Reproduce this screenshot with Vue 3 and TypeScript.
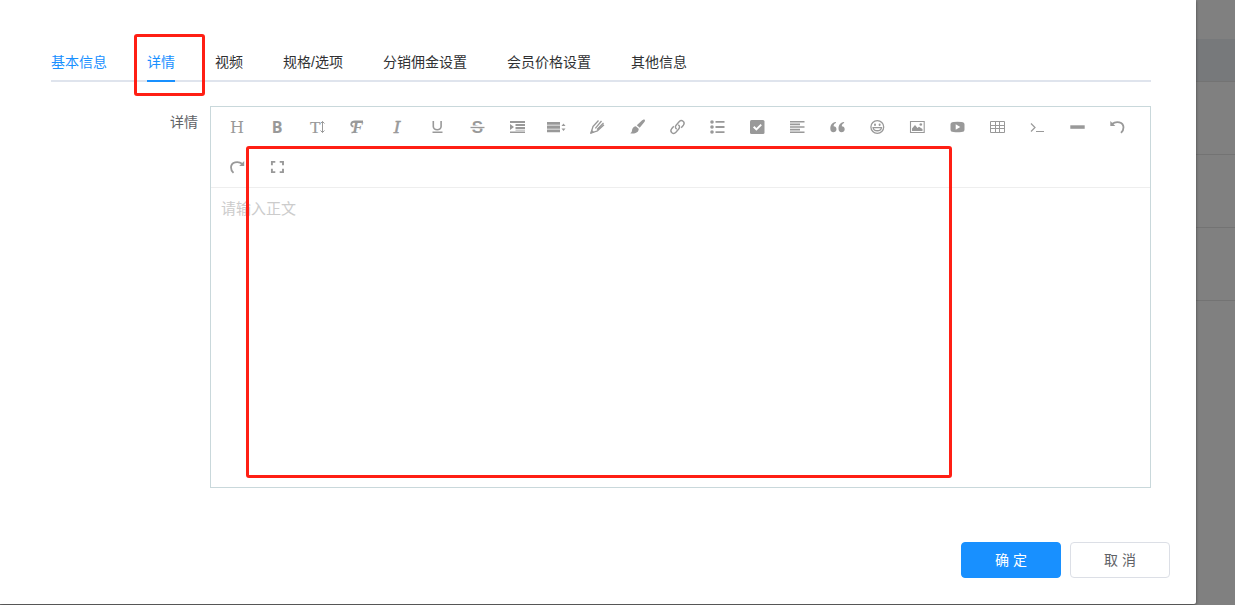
<script setup lang="ts">
import { ref } from 'vue'

interface Tool {
  name: string
  art: string
}

const tabs: string[] = ['基本信息', '详情', '视频', '规格/选项', '分销佣金设置', '会员价格设置', '其他信息']
const active = ref(1)
const body = ref('')

const serif = 'font-family="Liberation Serif, serif"'
const sans = 'font-family="Liberation Sans, sans-serif"'
const line = 'fill="none" stroke="currentColor"'

const tools: Tool[] = [
  { name: '标题', art: `<text x="8" y="14" font-size="16" text-anchor="middle" font-family="DejaVu Serif, serif">H</text>` },
  { name: '加粗', art: `<text x="8" y="14" font-size="16" font-weight="700" text-anchor="middle" font-family="Open Sans, sans-serif">B</text>` },
  { name: '字号', art: `<text x="1" y="14" font-size="17" stroke="currentColor" stroke-width=".2" ${serif}>T</text><path ${line} d="M13.500 2.500v11M11.500 4.500l2-2 2 2M11.500 11.500l2 2 2-2"/>` },
  { name: '字体', art: `<text x="3" y="14" font-size="17" font-weight="700" font-style="italic" ${serif}>F</text><path ${line} stroke-width="1.800" d="M4.500 7.500C1 7 1.500 2.500 6 2.500h8"/><path ${line} stroke-width="1.600" d="M2.500 13.500c2 .3 3-.5 3.600-2"/>` },
  { name: '斜体', art: `<text x="8" y="14" font-size="17" font-style="italic" text-anchor="middle" font-family="DejaVu Serif, serif" stroke="currentColor" stroke-width=".5">I</text>` },
  { name: '下划线', art: `<path ${line} stroke-width="1.600" d="M4.300 2v5.500a3.900 3.200 0 0 0 7.800 0V2"/><path d="M3.500 12.500h10V14h-10z"/>` },
  { name: '删除线', art: `<text x="8.500" y="14" font-size="17" font-weight="700" text-anchor="middle" ${sans}>S</text><path stroke="#fff" stroke-width="3" d="M1 8h15"/><path ${line} stroke-width="1.300" d="M1.500 8.500h14"/>` },
  { name: '缩进', art: `<path d="M1 2h15v2H1zM6.500 5h9.500v2H6.500zM6.500 8h9.500v2H6.500zM1 12.500h15v1.600H1zM1 5l4 3-4 3zM6.500 10.800h9.500v.800H6.500z"/>` },
  { name: '行高', art: `<path d="M-2 3h13v2.800H-2zM-2 6.600h13v3.200H-2zM-2 10.500h13v2.800H-2zM12.500 7L14.500 4.500 16.500 7zM12.500 9.500l2 2.500 2-2.500z"/>` },
  { name: '文字颜色', art: `<path ${line} stroke-width="1.300" stroke-linejoin="round" d="M9.500 1.500L4 7.500 2 14l6.500-2.200 6.500-6M12.500 2L6.300 9.300M14.500 4L8 10.500"/><path d="M1 15l1.500-4.500L5.500 13.500z"/>` },
  { name: '背景颜色', art: `<path d="M15.700.700c.6.600.2 1.600-.7 2.700l-4.300 5.400-2.900-2.500 4.600-4.400C13.700.700 15.100.100 15.700.700zM6.800 7.200l2.900 2.600c.3 4-4.800 5.600-8.500 4.400 2.500-1 1.200-3 2.500-5 .7-1.200 2-2 3.100-2z"/>` },
  { name: '链接', art: `<path ${line} stroke-width="1.400" d="M7.800 10.200c-1.700-1-1.700-2.800-.5-4.200l2.800-3.200c2.700-2.900 6.500.500 4.300 3.400l-2.200 2.500M9.200 5.800c1.700 1 1.700 2.800.5 4.200l-2.800 3.200c-2.700 2.900-6.500-.500-4.300-3.400l2.200-2.500"/>` },
  { name: '列表', art: `<circle cx="3" cy="3" r="1.800"/><circle cx="3" cy="8" r="1.800"/><circle cx="3" cy="13" r="1.800"/><path d="M6.500 2h9v1.800h-9zM6.500 7.100h9v1.800h-9zM6.500 12.200h9V14h-9z"/>` },
  { name: '待办事项', art: `<rect x="1" y="1" width="14.500" height="14" rx="1.500"/><path fill="none" stroke="#fff" stroke-width="2" d="M4.700 7.700l2.700 2.700 4.800-4.800"/>` },
  { name: '对齐方式', art: `<path d="M1 2h14.500v1.600H1zM1 4.600h10v1.600H1zM1 7.200h14.500v1.600H1zM1 9.800h10v1.600H1zM1 12.400h14.500V14H1z"/>` },
  { name: '引用', art: `<path d="M6.800 3C2.800 3.500 1.300 6.500 1.300 9.500c0 2.500 1.200 3.700 3 3.700 1.800 0 3.200-1.200 3.200-3s-1.200-3-2.900-3C4.600 5.500 5.300 4.500 7 3.900zM15 3C11 3.500 9.500 6.500 9.500 9.500c0 2.500 1.200 3.700 3 3.700 1.800 0 3.200-1.200 3.200-3s-1.200-3-2.900-3c0-1.700.7-2.700 2.400-3.300z"/>` },
  { name: '表情', art: `<circle cx="8.300" cy="8" r="6.400" ${line} stroke-width="1.300"/><ellipse cx="6" cy="5.800" rx="1" ry="1.300"/><ellipse cx="10.600" cy="5.800" rx="1" ry="1.300"/><path ${line} stroke-width="1.300" d="M4.100 8.600h8.400c-.6 4.200-7.800 4.200-8.400 0z"/>` },
  { name: '图片', art: `<path ${line} stroke-width="1.100" d="M1.500 2.500h13.700v11H1.500z"/><path d="M3 12V9.500L6 6l2.500 3 1.500-1.200 3.500 2.200v2z"/><circle cx="11.800" cy="5.500" r="1.300"/>` },
  { name: '视频', art: `<path fill-rule="evenodd" d="M4.500 3Q8.500 2.500 12.500 3q3 0 3 2.500v5q0 2.500-3 2.500-4 .500-8 0-3 0-3-2.500v-5Q1.500 3 4.500 3zM6.700 5.200v5.600L11.300 8z"/>` },
  { name: '表格', art: `<path ${line} d="M1.500 2.500h14v11h-14zM1.500 6.500h14M1.500 9.500h14M6.500 2.500v11M10.500 2.500v11"/>` },
  { name: '代码', art: `<path ${line} stroke-width="1.200" d="M2 4.500l4 4-4 4M7 12.500h8"/>` },
  { name: '分割线', art: `<path d="M1.300 6.300h14.400v3.500H1.300z"/>` },
  { name: '撤销', art: `<path ${line} stroke-width="1.800" d="M3 5C7.500 1.500 14.300 3 14.500 8.300c.1 2.200-.9 4-2.500 5.500"/><path d="M1.300 2v5h5z"/>` },
  { name: '恢复', art: `<path ${line} stroke-width="1.800" d="M13.500 5C9 1.500 2.200 3 2 8.300c-.1 2.200.9 4 2.500 5.500"/><path d="M15.200 2v5h-5z"/>` },
  { name: '全屏', art: `<path ${line} stroke-width="1.900" d="M2.900 6.200V2.900h3.400M10.700 2.900H14v3.300M14 9.800v3.300h-3.300M6.300 13.100H2.900V9.800"/>` }
]
</script>

<template>
  <div class="screen">
    <main class="dialog">
      <nav class="tabs">
        <button
          v-for="(tab, i) in tabs"
          :key="tab"
          type="button"
          class="tab"
          :class="{ visited: i === 0, active: i === active }"
          @click="active = i"
        >
          {{ tab }}
          <span v-if="i === 1" class="mark mark-tab"></span>
        </button>
      </nav>

      <div class="field">
        <label class="label" for="detail">详情</label>
        <div class="editor">
          <div class="toolbar">
            <button v-for="tool in tools" :key="tool.name" type="button" class="tool" :aria-label="tool.name">
              <svg viewBox="0 0 16 16" fill="currentColor" aria-hidden="true" v-html="tool.art"></svg>
            </button>
          </div>
          <textarea id="detail" v-model="body" class="body" placeholder="请输入正文"></textarea>
          <span class="mark mark-editor"></span>
        </div>
      </div>

      <footer class="actions">
        <button type="button" class="btn primary">确 定</button>
        <button type="button" class="btn">取 消</button>
      </footer>
    </main>
    <div class="behind">
      <div class="row top"></div>
      <div class="row head"></div>
      <div class="row"></div>
      <div class="row"></div>
      <div class="row"></div>
    </div>
  </div>
</template>

<style>
body {
  margin: 0;
}
</style>

<style scoped>
.screen {
  display: grid;
  grid-template-columns: 1fr 39px;
  min-height: 100vh;
  background: #808080;
  font-family: "Liberation Sans", "Noto Sans CJK SC", sans-serif;
  font-size: 14px;
  color: #303133;
}
.screen * {
  box-sizing: border-box;
}
button {
  font: inherit;
  cursor: pointer;
}
.dialog {
  position: relative;
  display: flex;
  flex-direction: column;
  margin-bottom: 1px;
  padding: 42px 26px 26px 51px;
  background: #fff;
  border-radius: 0 0 2px 0;
  box-shadow: 0 1px 3px rgba(0, 0, 0, 0.5);
}
.tabs {
  display: flex;
  gap: 40px;
  height: 40px;
  margin-right: 19px;
  border-bottom: 2px solid #dfe4ed;
}
.tab {
  position: relative;
  height: 40px;
  padding: 2px 0 0;
  border: 0;
  border-bottom: 2px solid transparent;
  background: none;
  line-height: 36px;
  color: #303133;
  white-space: nowrap;
}
.tab.visited {
  color: #1890ff;
}
.tab.active {
  color: #1890ff;
  border-bottom-color: #1890ff;
}
.mark {
  position: absolute;
  border: 3px solid #ff1f14;
  border-radius: 3px;
  pointer-events: none;
}
.mark-tab {
  inset: -8px -30px -16px -13px;
}
.mark-editor {
  inset: 39px 198px 9px 35px;
}
.field {
  display: flex;
  margin: 24px 19px 0 0;
}
.label {
  flex: 0 0 159px;
  padding-right: 12px;
  line-height: 32px;
  text-align: right;
  color: #606266;
}
.editor {
  position: relative;
  display: flex;
  flex: 1;
  flex-direction: column;
  border: 1px solid #c9d8db;
}
.toolbar {
  display: flex;
  flex-wrap: wrap;
  padding: 0 6px;
  border-bottom: 1px solid #eee;
}
.tool {
  display: flex;
  align-items: center;
  justify-content: center;
  width: 40px;
  height: 40px;
  padding: 0;
  border: 0;
  background: none;
  color: #999;
}
.tool svg {
  width: 16px;
  height: 16px;
  overflow: visible;
}
.body {
  display: block;
  width: 100%;
  height: 299px;
  padding: 10px;
  border: 0;
  outline: 0;
  resize: none;
  background: none;
  font: 15px/22px "Liberation Sans", "Noto Sans CJK SC", sans-serif;
  color: #303133;
}
.body::placeholder {
  color: #ccc;
  opacity: 1;
}
.actions {
  display: flex;
  justify-content: flex-end;
  gap: 9px;
  margin-top: auto;
  padding-top: 54px;
}
.btn {
  width: 100px;
  height: 36px;
  padding: 0 0 2px;
  border: 1px solid #dcdfe6;
  border-radius: 4px;
  background: #fff;
  color: #606266;
}
.btn.primary {
  border-color: #1890ff;
  background: #1890ff;
  color: #fff;
}
.row {
  height: 73px;
  border-bottom: 1px solid #737373;
}
.row.top {
  height: 39px;
  border: 0;
}
.row.head {
  height: 43px;
  background: #77797b;
}
</style>
